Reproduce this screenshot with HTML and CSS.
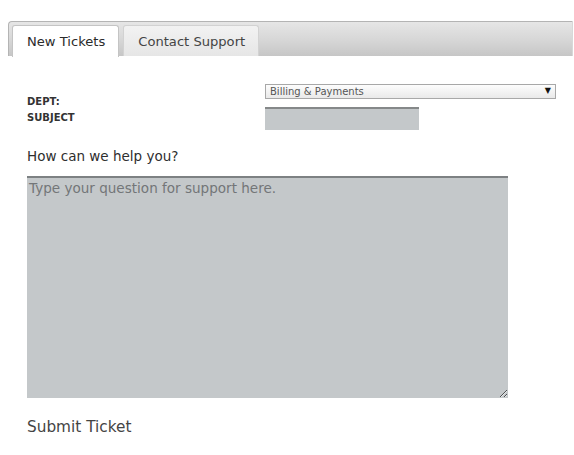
FILE: index.html
```html
<!DOCTYPE html>
<html lang="en">
<head>
<meta charset="utf-8">
<title>Support</title>
<link rel="stylesheet" href="styles.css">
</head>
<body>
<div class="page">
  <nav class="tabbar">
    <a class="tab tab-active" href="#">New Tickets</a>
    <a class="tab" href="#">Contact Support</a>
  </nav>
  <form class="ticket-form">
    <div class="fields">
      <div class="labels">
        <label class="field-label" for="dept">DEPT:</label>
        <label class="field-label" for="subject">SUBJECT</label>
      </div>
      <div class="controls">
        <div class="select-wrap">
          <select id="dept" class="select">
            <option>Billing &amp; Payments</option>
            <option>Technical Support</option>
            <option>Sales</option>
          </select>
        </div>
        <input id="subject" class="text-input" type="text">
      </div>
    </div>
    <p class="question">How can we help you?</p>
    <textarea class="message" placeholder="Type your question for support here."></textarea>
    <p class="submit">Submit Ticket</p>
  </form>
</div>
</body>
</html>
```

FILE: styles.css
```css
* { box-sizing: border-box; }
html, body { margin: 0; padding: 0; background: #fff; }
body {
  font-family: "DejaVu Sans", Verdana, sans-serif;
  color: #333;
}
.page { padding-top: 21px; }

.tabbar {
  display: flex;
  align-items: flex-end;
  gap: 4px;
  height: 35px;
  margin: 0 1px 0 8px;
  padding-left: 3px;
  border: 1px solid #b4b4b4;
  border-bottom: none;
  border-right-color: #d8d8d8;
  border-radius: 4px 0 0 0;
  background: linear-gradient(to bottom, #e6e6e6 0%, #d6d6d6 55%, #c6c6c6 100%);
}
.tab {
  display: block;
  height: 31px;
  padding: 8px 13px 0 14px;
  font-size: 13.1px;
  line-height: 16px;
  color: #444;
  text-decoration: none;
  border: 1px solid #d2d2d2;
  border-bottom: none;
  border-radius: 3px 3px 0 0;
  background: linear-gradient(to bottom, #f2f2f2, #e6e6e6);
}
.tab-active {
  background: #fff;
  border-color: #c4c4c4;
  color: #2b2b2b;
  margin-bottom: -1px;
  height: 32px;
}

.ticket-form { padding: 28px 0 0 27px; }
.fields { display: flex; }
.labels {
  width: 238px;
  display: flex;
  flex-direction: column;
  gap: 4px;
  padding-top: 12px;
}
.field-label {
  font-size: 10px;
  line-height: 12px;
  font-weight: bold;
  color: #333;
}
.controls { display: flex; flex-direction: column; gap: 8px; }
.select-wrap { position: relative; width: 291px; height: 15px; }
.select-wrap::after {
  content: "\25BC";
  position: absolute;
  right: 5px;
  top: 1px;
  font-size: 8px;
  line-height: 12px;
  color: #111;
  pointer-events: none;
}
.select {
  -webkit-appearance: none;
  appearance: none;
  display: block;
  width: 100%;
  height: 15px;
  margin: 0;
  padding: 0 4px;
  font-family: "DejaVu Sans", Verdana, sans-serif;
  font-size: 10px;
  line-height: 13px;
  color: #555;
  border: 1px solid #a8a8a8;
  border-radius: 0;
  background: linear-gradient(to bottom, #fdfdfd, #e9e9e9);
}
.text-input {
  display: block;
  width: 154px;
  height: 23px;
  margin: 0;
  padding: 2px;
  border: none;
  border-top: 2px solid #858889;
  background: #c4c8ca;
  font-family: "DejaVu Sans", Verdana, sans-serif;
  font-size: 12px;
}
.question {
  margin: 18px 0 0;
  font-size: 13.5px;
  line-height: 16px;
  color: #2e2e2e;
}
.message {
  display: block;
  width: 481px;
  height: 222px;
  margin: 12px 0 0;
  padding: 2px 2px;
  border: none;
  border-top: 2px solid #7d8183;
  background: #c4c8ca;
  font-family: "DejaVu Sans", Verdana, sans-serif;
  font-size: 13.55px;
  line-height: 16px;
  color: #333;
}
.message::placeholder { color: #737678; }
.submit {
  margin: 20px 0 0;
  font-size: 15.3px;
  line-height: 18px;
  color: #444;
}
```
